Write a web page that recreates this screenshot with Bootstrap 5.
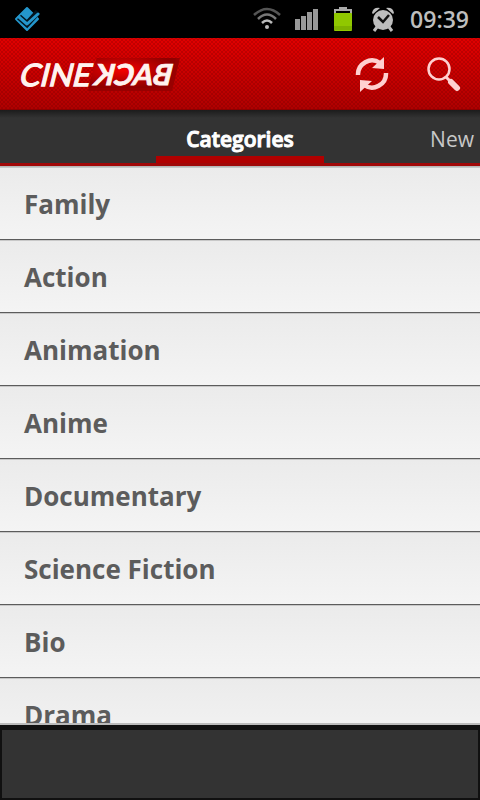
<!DOCTYPE html>
<html lang="en">
<head>
<meta charset="utf-8">
<meta name="viewport" content="width=device-width, initial-scale=1">
<title>Cineback</title>
<link href="https://cdn.jsdelivr.net/npm/bootstrap@5.3.0/dist/css/bootstrap.min.css" rel="stylesheet">
<style>
body { font-family: "Open Sans", "Noto Sans", sans-serif; background: #000; }
.status-bar { height: 38px; background: #000; color: #bebebe; padding: 0 11px 0 14px; }
.status-icons { gap: 14px; }
.clock { font-size: 23px; line-height: 38px; font-weight: 600; margin-left: 1px; }
.app-bar {
  height: 72px; padding: 0 18px; border-bottom: 1px solid #8d0000;
  background:
    radial-gradient(circle, rgba(90,0,0,.22) 1px, transparent 1px) 0 0 / 4px 4px,
    radial-gradient(circle, rgba(90,0,0,.22) 1px, transparent 1px) 2px 2px / 4px 4px,
    linear-gradient(#e20000, #b00000);
}
.app-actions { gap: 36px; }
.icon-btn { width: 36px; height: 36px; padding: 0; border: 0; background: none; }
.tabs-bar {
  height: 56px; border-bottom: 3px solid #a00808;
  background: linear-gradient(#1c1c1c, #333 8px);
  display: grid; grid-template-columns: 1fr 168px 1fr;
}
.tab-item { padding-top: 12px; font-size: 21px; line-height: 34px; color: #c8c8c8; text-decoration: none; }
.tab-item.active { font-weight: 600; color: #fff; border-bottom: 7px solid #b00000; -webkit-text-stroke: 1px #fff; }
.tab-next { padding-right: 6px; }
.cat-list { min-height: 0; border-top: 1px solid #b4b8b8; border-bottom: 2px solid #bbb; background: #f2f2f2; }
.cat-item {
  height: 73px; padding: 0 24px; border: 0; border-bottom: 1px solid #5c5c5c;
  font-size: 26px; line-height: 74px; font-weight: 700; color: #5c5c5c;
  background: linear-gradient(#c8c8c8 1px, #ebebeb 1px, #f4f4f4);
}
.cat-item:hover { color: #5c5c5c; }
.ad-strip { height: 75px; background: #333; border: 2px solid #101010; border-top-width: 5px; }
</style>
</head>
<body class="vh-100 d-flex flex-column overflow-hidden">
<div class="status-bar d-flex align-items-center justify-content-between flex-shrink-0">
  <svg width="26" height="26" viewBox="0 0 26 26" aria-hidden="true">
    <path d="M13 2 24 13 13 24 2 13Z" fill="#2496cc" stroke="#2496cc" stroke-width="2" stroke-linejoin="round"/>
    <path d="m5 11 8 7L24 6" fill="none" stroke="#03141e" stroke-width="6"/>
    <path d="m5 11 8 7L24 8" fill="none" stroke="#2496cc" stroke-width="3" stroke-linecap="round" stroke-linejoin="round"/>
  </svg>
  <div class="status-icons d-flex align-items-center">
    <svg width="28" height="26" viewBox="0 0 28 26" fill="none" stroke-width="2.500" aria-hidden="true">
      <path d="M1 9Q14-3 27 9" stroke="#555"/><path d="M5 13Q14 4 23 13" stroke="#777"/>
      <path d="M9 17Q14 12 19 17" stroke="#bbb"/><circle cx="14" cy="21" r="2" fill="#bbb"/>
    </svg>
    <svg width="24" height="24" viewBox="0 0 24 24" fill="#999" aria-hidden="true">
      <path d="M0 12h5v11H0zM6 9h5v14H6zM12 5h5v18h-5zM18 2h5v21h-5z"/>
    </svg>
    <svg width="20" height="26" viewBox="0 0 20 26" aria-hidden="true">
      <path d="M2 9V4h16v5M7 3V2h6v1" fill="none" stroke="#aaa" stroke-width="2"/>
      <rect x="1" y="7" width="18" height="18" rx="1" fill="#90c800"/>
      <path d="M1 20h18v4H1z" fill="#7fb200"/>
    </svg>
    <svg class="ms-1" width="24" height="26" viewBox="0 0 24 26" aria-hidden="true">
      <path d="M1 7Q2 1 9 2L2 8ZM23 7Q22 1 15 2l7 6Z" fill="#bebebe"/>
      <path d="m6 21-3 4M18 21l3 4" stroke="#bebebe" stroke-width="3"/>
      <circle cx="12" cy="14" r="10" fill="#bebebe"/>
      <path d="m7 11 5 5 6-7" fill="none" stroke="#111" stroke-width="2.500"/>
    </svg>
    <span class="clock">09:39</span>
  </div>
</div>
<header class="app-bar d-flex align-items-center justify-content-between flex-shrink-0">
  <svg width="164" height="40" viewBox="0 0 164 40" role="img" aria-label="Cineback">
    <defs>
      <radialGradient id="glow" cx=".4" cy=".4" r=".6"><stop stop-color="#f40000"/><stop offset="1" stop-color="#900000"/></radialGradient>
    </defs>
    <path d="M79 4H162L154 37H70Z" fill="#980000"/>
    <path d="M79 4H158L151 34H70Z" fill="url(#glow)"/>
    <g fill="#fff3ef" stroke="#fff3ef" font-family="Lato, sans-serif">
      <text transform="translate(0 32) skewX(-14)" font-size="31" font-weight="400" stroke-width="1.300">CINE</text>
      <text transform="translate(152 31) skewX(-14) scale(-1 1)" font-size="29" font-weight="700" stroke-width=".8">BACK</text>
    </g>
  </svg>
  <div class="app-actions d-flex align-items-center">
    <button class="icon-btn d-flex" type="button" aria-label="Refresh">
      <svg width="36" height="36" viewBox="0 0 36 36" aria-hidden="true">
        <g fill="none" stroke="#ffd0d0" stroke-width="4.500"><path d="M4 19A14 14 0 0 1 26 7"/><path d="M32 17A14 14 0 0 1 10 29"/></g>
        <path d="M30 1v12l-12-1ZM6 36V24l12 1Z" fill="#ffd0d0"/>
      </svg>
    </button>
    <button class="icon-btn d-flex" type="button" aria-label="Search">
      <svg width="36" height="36" viewBox="0 0 36 36" fill="none" stroke="#ffd0d0" aria-hidden="true">
        <circle cx="13" cy="13" r="10.500" stroke-width="2.500"/>
        <path d="m20 21 4 4" stroke-width="3"/><path d="m25 26 6 6" stroke-width="6" stroke-linecap="round"/>
      </svg>
    </button>
  </div>
</header>
<nav class="tabs-bar flex-shrink-0" aria-label="Sections">
  <span></span>
  <a class="tab-item active text-center" href="#categories" aria-current="page">Categories</a>
  <a class="tab-item tab-next text-end" href="#new">New</a>
</nav>
<main id="categories" class="cat-list list-group list-group-flush rounded-0 flex-grow-1 overflow-hidden">
  <a class="cat-item list-group-item flex-shrink-0" href="#family">Family</a>
  <a class="cat-item list-group-item flex-shrink-0" href="#action">Action</a>
  <a class="cat-item list-group-item flex-shrink-0" href="#animation">Animation</a>
  <a class="cat-item list-group-item flex-shrink-0" href="#anime">Anime</a>
  <a class="cat-item list-group-item flex-shrink-0" href="#documentary">Documentary</a>
  <a class="cat-item list-group-item flex-shrink-0" href="#scifi">Science Fiction</a>
  <a class="cat-item list-group-item flex-shrink-0" href="#bio">Bio</a>
  <a class="cat-item list-group-item flex-shrink-0" href="#drama">Drama</a>
</main>
<footer class="ad-strip flex-shrink-0"></footer>
<script src="https://cdn.jsdelivr.net/npm/bootstrap@5.3.0/dist/js/bootstrap.bundle.min.js"></script>
</body>
</html>
